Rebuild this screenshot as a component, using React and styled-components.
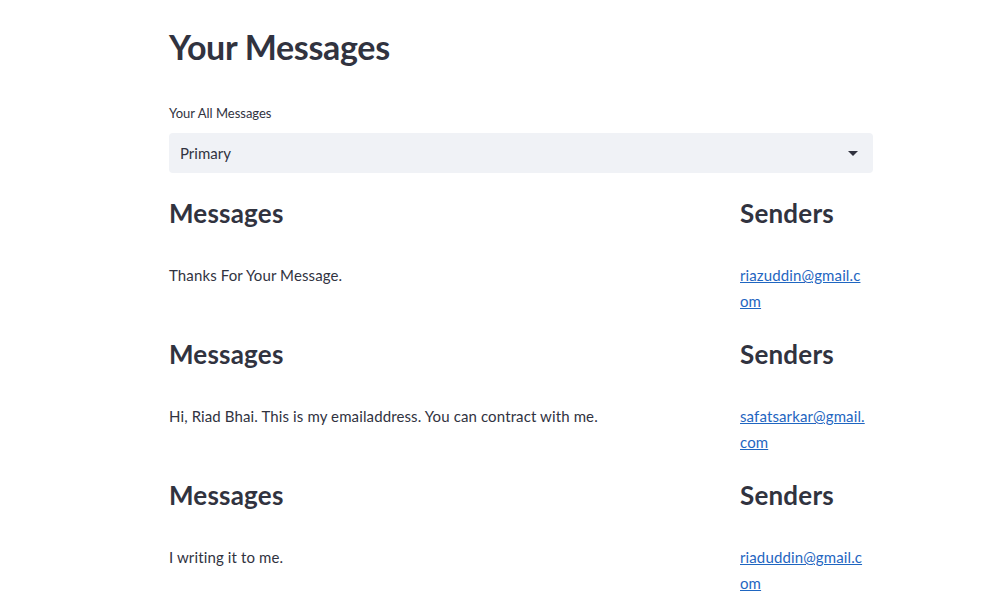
import React from 'react'
import styled, { createGlobalStyle } from 'styled-components'

const GlobalStyle = createGlobalStyle`
  body {
    margin: 0;
    background: #ffffff;
    font-family: Lato, "Liberation Sans", sans-serif;
    color: #31333f;
  }
`

const Page = styled.main`
  width: 704px;
  padding: 20px 0 0 169px;
`

const Title = styled.h1`
  margin: 0;
  font-size: 34px;
  font-weight: 700;
  line-height: 54px;
  letter-spacing: -0.3px;
`

const Label = styled.label`
  display: block;
  margin-top: 29px;
  font-size: 13px;
  line-height: 20px;
`

const Select = styled.div`
  margin-top: 10px;
  height: 40px;
  display: flex;
  align-items: center;
  justify-content: space-between;
  padding: 0 12px 0 11px;
  background: #f0f2f6;
  border-radius: 4px;
  font-size: 15px;
  cursor: pointer;

  .caret {
    width: 0;
    height: 0;
    border-left: 5px solid transparent;
    border-right: 5px solid transparent;
    border-top: 5px solid #31333f;
    margin-right: 3px;
  }
`

const Row = styled.section`
  display: grid;
  grid-template-columns: 1fr 133px;
  column-gap: 38px;
  margin-top: 16px;
`

const Heading = styled.h2`
  margin: 0;
  font-size: 26px;
  font-weight: 700;
  line-height: 48px;
  letter-spacing: 0.2px;
`

const Body = styled.p`
  margin: 25px 0 0;
  font-size: 15px;
  line-height: 26px;
  letter-spacing: 0.12px;
`

const Mail = styled.a`
  display: block;
  margin-top: 25px;
  padding-right: 7px;
  font-size: 15px;
  line-height: 26px;
  letter-spacing: 0.12px;
  color: #1f66c1;
  text-decoration: underline;
  overflow-wrap: anywhere;
`

const messages = [
  { text: 'Thanks For Your Message.', from: 'riazuddin@gmail.com' },
  { text: 'Hi, Riad Bhai. This is my emailaddress. You can contract with me.', from: 'safatsarkar@gmail.com' },
  { text: 'I writing it to me.', from: 'riaduddin@gmail.com' },
]

export default function App() {
  return (
    <>
      <GlobalStyle />
      <Page>
        <Title>Your Messages</Title>
        <Label>Your All Messages</Label>
        <Select>
          <span>Primary</span>
          <span className="caret" />
        </Select>
        {messages.map((m, i) => (
          <Row key={i}>
            <div>
              <Heading>Messages</Heading>
              <Body>{m.text}</Body>
            </div>
            <div>
              <Heading>Senders</Heading>
              <Mail href={'mailto:' + m.from}>{m.from}</Mail>
            </div>
          </Row>
        ))}
      </Page>
    </>
  )
}
